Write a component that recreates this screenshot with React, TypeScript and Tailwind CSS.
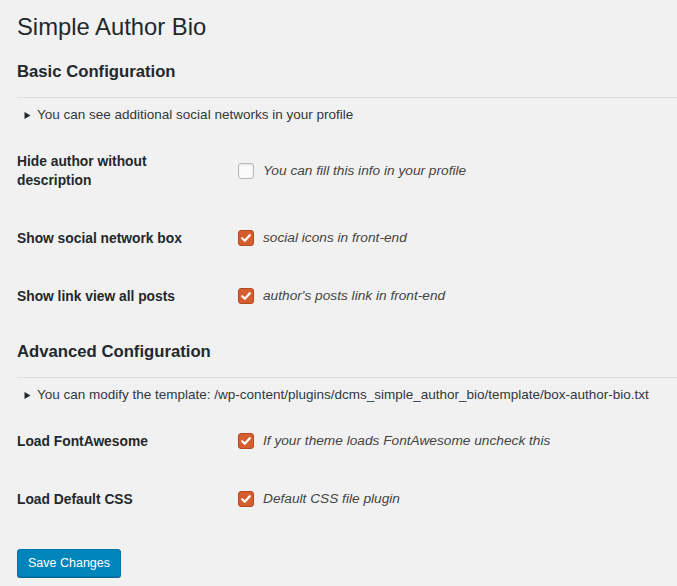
import type { ReactNode } from "react"

const FONT = { fontFamily: '"Liberation Sans", Arial, sans-serif' }

function Box({ checked }: { checked: boolean }) {
  if (!checked) {
    return (
      <span className="box-border inline-block size-4 shrink-0 rounded-[3px] border border-[#b4b9be] bg-[#fbfbfb] shadow-[inset_0_1px_2px_rgba(0,0,0,0.1)]" />
    )
  }
  return (
    <span className="box-border inline-flex size-4 shrink-0 items-center justify-center rounded-[3px] border border-[#b24a22] bg-[#d65e2e]">
      <svg className="size-[12px]" viewBox="0 0 12 12" fill="none" stroke="white" strokeWidth="2.2" strokeLinecap="round" strokeLinejoin="round">
        <polyline points="2.2,6.3 4.8,8.8 9.8,3.2" />
      </svg>
    </span>
  )
}

function Summary({ children }: { children: ReactNode }) {
  return (
    <div className="flex h-5 items-center pl-[7px] text-[13.5px] text-[#32373c]">
      <svg className="mr-[6px] size-[7px]" viewBox="0 0 7 7">
        <polygon points="0.5,0 6.5,3.5 0.5,7" fill="#23282d" />
      </svg>
      {children}
    </div>
  )
}

function Row({ label, checked, hint, className }: { label: ReactNode; checked: boolean; hint: string; className: string }) {
  return (
    <div className={`flex items-center ${className}`}>
      <div className="w-[221px] pr-4 text-[13.8px] font-bold leading-[19px] text-[#23282d]">{label}</div>
      <div className="flex items-center gap-[9px]">
        <Box checked={checked} />
        <span className="text-[13.7px] italic text-[#444]">{hint}</span>
      </div>
    </div>
  )
}

export default function App() {
  return (
    <div className="min-h-screen bg-[#f1f1f1] pl-[17px]" style={FONT}>
      <div className="flex flex-col pt-[12px]">
        <h1 className="h-[30px] text-[23.8px] leading-[30px] text-[#23282d]">Simple Author Bio</h1>

        <h2 className="mt-[18px] h-6 text-[16.7px] font-bold leading-6 text-[#23282d]">Basic Configuration</h2>
        <div className="mt-[13px] h-px bg-[#dcdcdc]" />
        <div className="mt-[7px]">
          <Summary>You can see additional social networks in your profile</Summary>
        </div>

        <Row className="mt-[26px] h-10" label={<>Hide author without<br />description</>} checked={false} hint="You can fill this info in your profile" />
        <Row className="mt-[37px] h-5" label="Show social network box" checked hint="social icons in front-end" />
        <Row className="mt-[38px] h-5" label="Show link view all posts" checked hint="author's posts link in front-end" />

        <h2 className="mt-[34px] h-6 text-[16.7px] font-bold leading-6 text-[#23282d]">Advanced Configuration</h2>
        <div className="mt-[13px] h-px bg-[#dcdcdc]" />
        <div className="mt-[7px]">
          <Summary>You can modify the template: /wp-content/plugins/dcms_simple_author_bio/template/box-author-bio.txt</Summary>
        </div>

        <Row className="mt-[26px] h-5" label="Load FontAwesome" checked hint="If your theme loads FontAwesome uncheck this" />
        <Row className="mt-[38px] h-5" label="Load Default CSS" checked hint="Default CSS file plugin" />

        <div className="mt-[40px]">
          <button className="h-[28px] rounded-[3px] border border-[#0073aa] bg-[#0085ba] px-[10px] text-[12.5px] text-white shadow-[0_1px_0_#006799]">
            Save Changes
          </button>
        </div>
      </div>
    </div>
  )
}
